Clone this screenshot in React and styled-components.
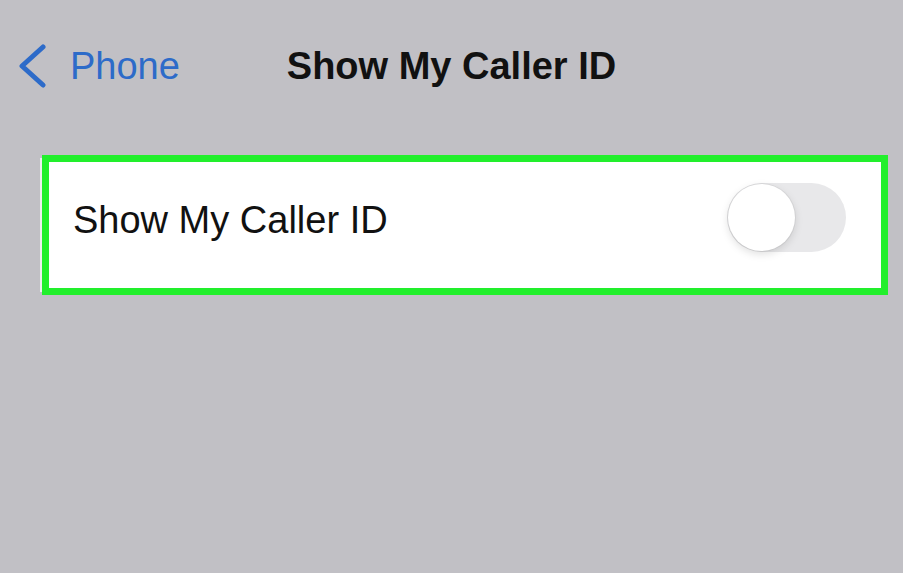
import React from "react";
import styled, { createGlobalStyle } from "styled-components";

const Global = createGlobalStyle`
  html, body { margin: 0; padding: 0; background: #c1c0c5; }
  body { font-family: "Liberation Sans", Arial, sans-serif; }
`;

const Page = styled.div`
  width: 903px;
  height: 573px;
  background: #c1c0c5;
  overflow: hidden;
`;

const NavBar = styled.div`
  display: grid;
  grid-template-columns: 1fr auto 1fr;
  align-items: center;
  height: 134px;
  padding: 0 18px;
  box-sizing: border-box;
`;

const BackButton = styled.div`
  display: flex;
  align-items: center;
  gap: 24px;
  color: #2d6bc9;
  font-size: 38px;
  margin-top: -2px;
`;

const Title = styled.div`
  font-size: 38px;
  font-weight: 700;
  color: #111;
  margin-top: -2px;
`;

const Card = styled.div`
  margin: 21px 15px 0 42px;
  height: 140px;
  box-sizing: border-box;
  border: 7px solid #22ef2c;
  background: #fff;
  display: flex;
  align-items: center;
  justify-content: space-between;
  padding: 0 35px 0 24px;
  box-shadow: -5px 0 0 -3px #efeff1;
`;

const Label = styled.span`
  font-size: 38px;
  color: #111;
  margin-top: -10px;
`;

const Track = styled.div`
  position: relative;
  width: 119px;
  height: 69px;
  border-radius: 35px;
  background: #e8e8ea;
  margin-top: -15px;
`;

const Knob = styled.div`
  position: absolute;
  left: 1px;
  top: 1px;
  width: 67px;
  height: 67px;
  border-radius: 50%;
  background: #fff;
  box-shadow: 0 3px 8px rgba(0, 0, 0, 0.13), 0 0 0 1px rgba(0, 0, 0, 0.05);
`;

export default function App() {
  return (
    <Page>
      <Global />
      <NavBar>
        <BackButton>
          <svg width="28" height="44" viewBox="0 0 28 44">
            <polyline
              points="25,3 4,22 25,41"
              fill="none"
              stroke="#2d6bc9"
              strokeWidth="5"
              strokeLinecap="round"
              strokeLinejoin="round"
            />
          </svg>
          <span>Phone</span>
        </BackButton>
        <Title>Show My Caller ID</Title>
        <div />
      </NavBar>
      <Card>
        <Label>Show My Caller ID</Label>
        <Track>
          <Knob />
        </Track>
      </Card>
    </Page>
  );
}
